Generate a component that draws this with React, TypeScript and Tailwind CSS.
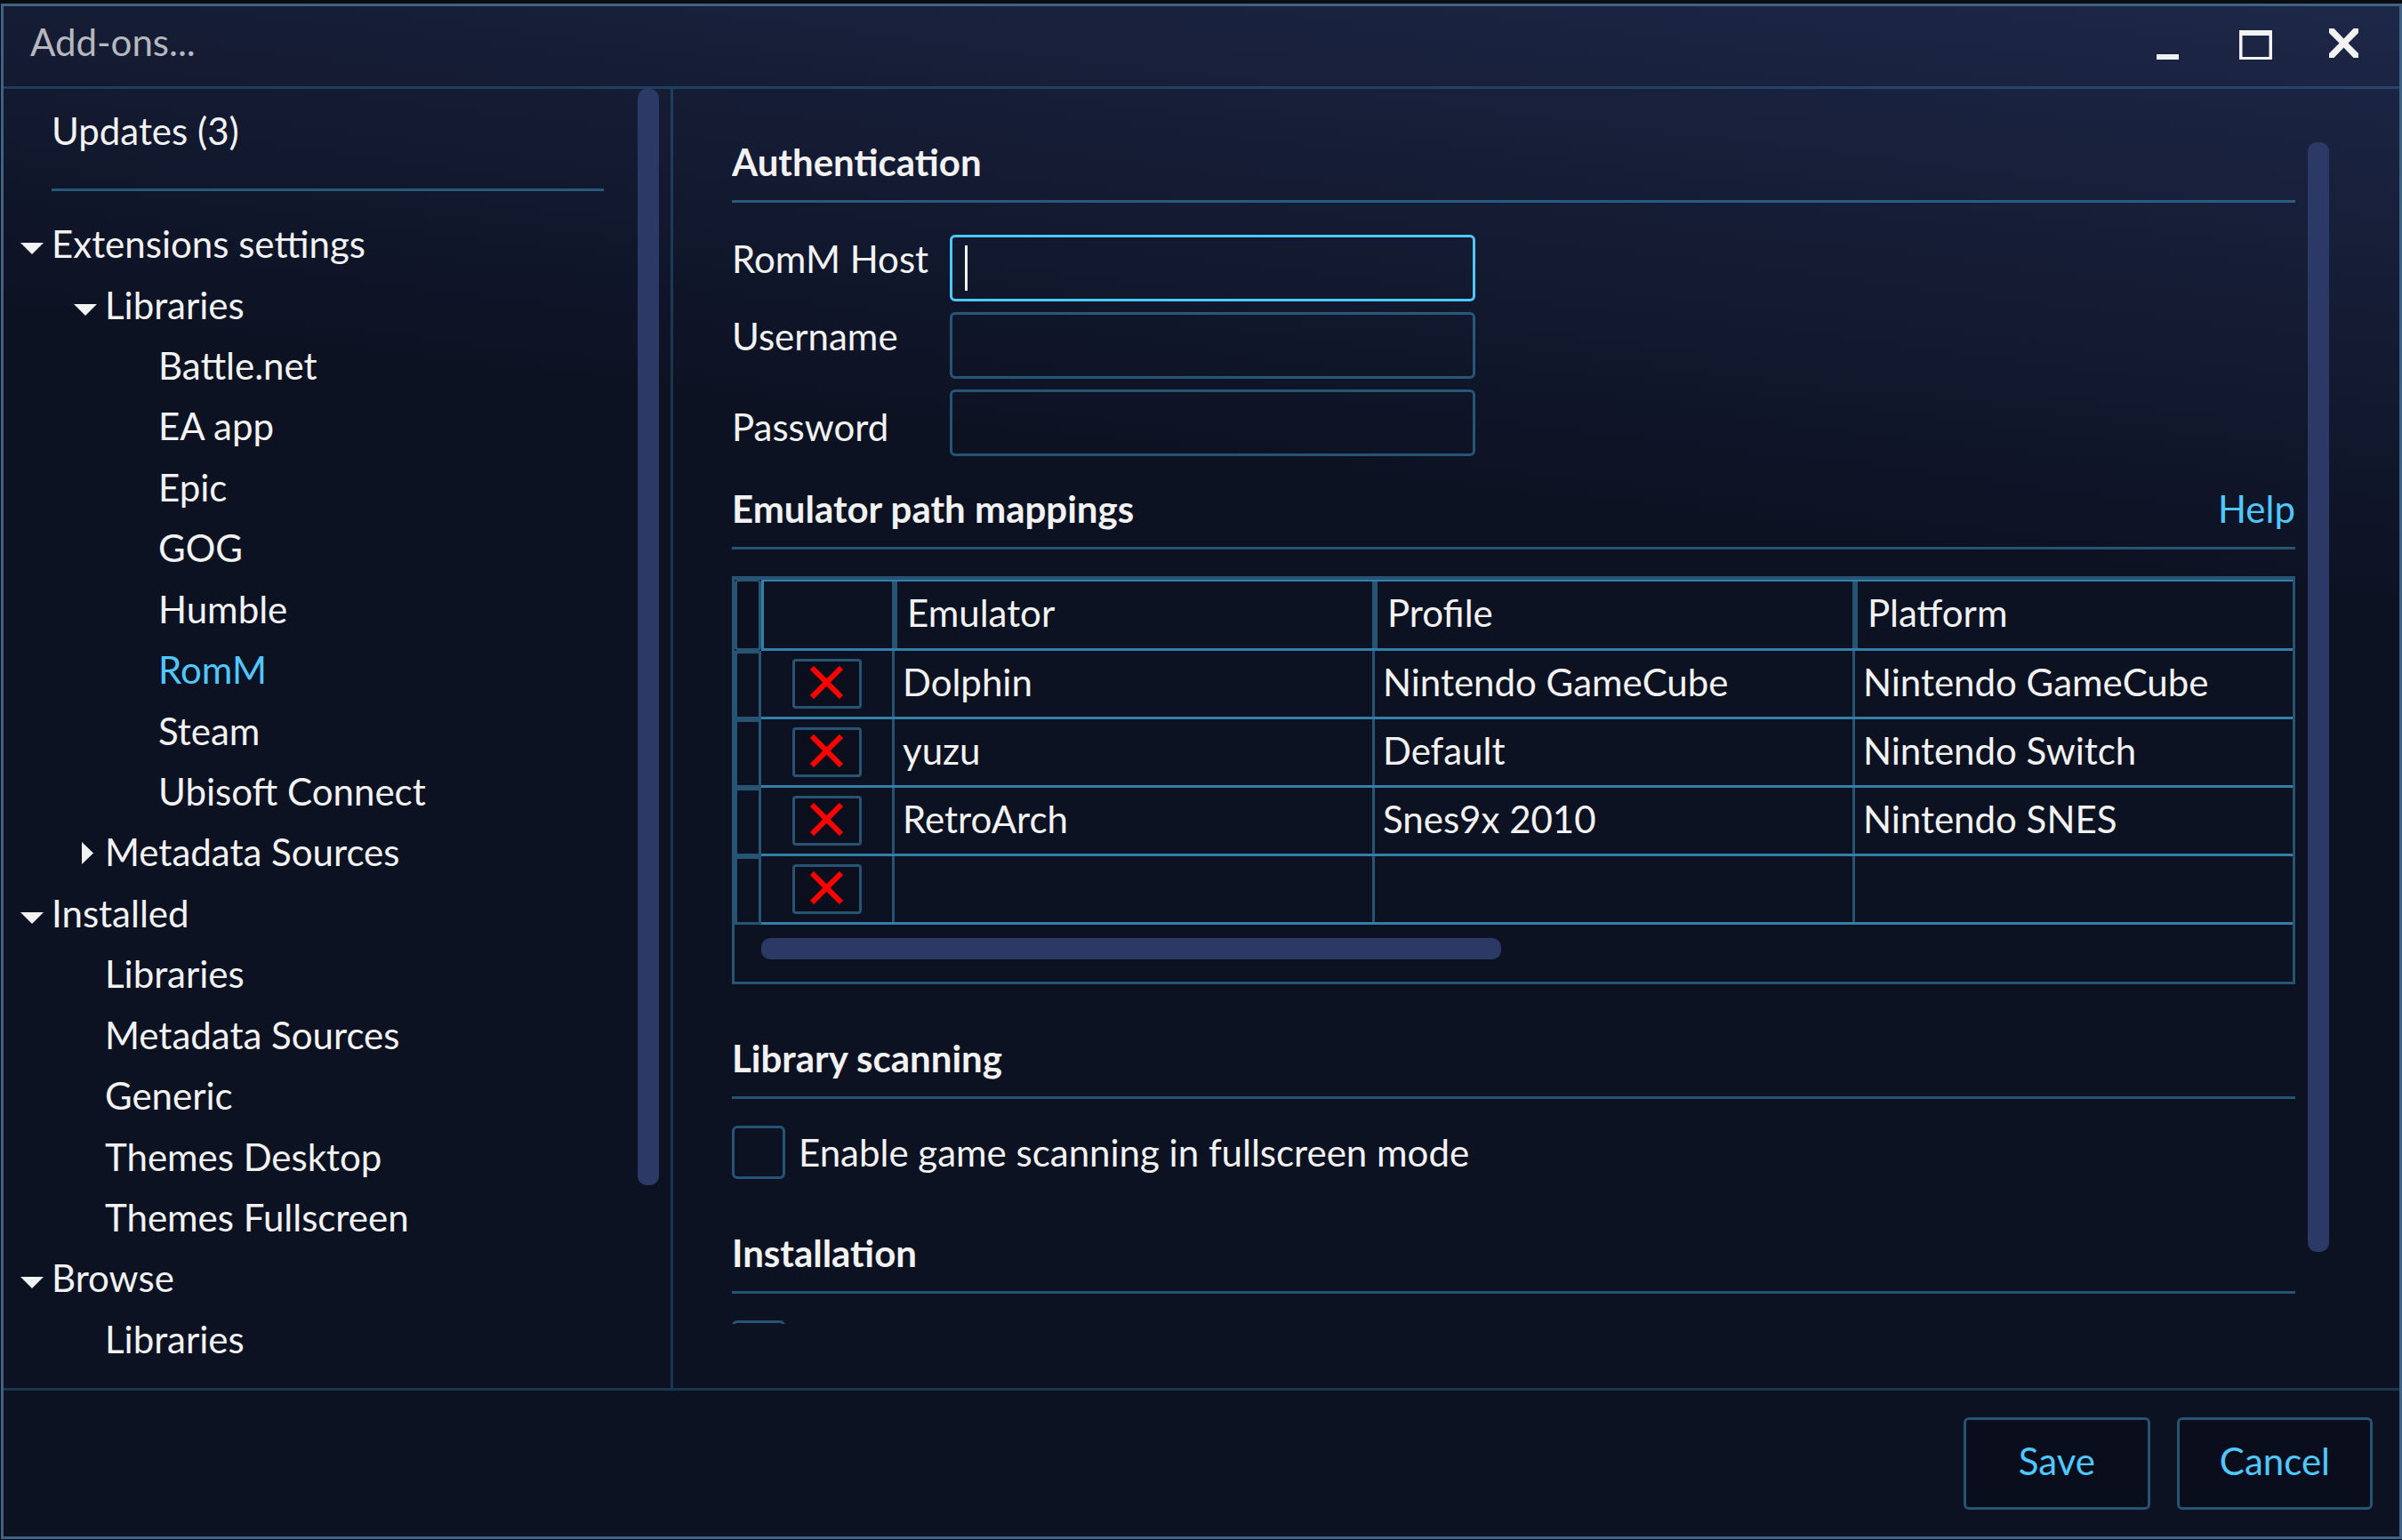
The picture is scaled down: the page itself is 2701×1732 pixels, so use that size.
import React from "react";

type TreeNode = {
  label: string;
  level: 0 | 1 | 2;
  state?: "open" | "closed";
  selected?: boolean;
};

const tree: TreeNode[] = [
  { label: "Extensions settings", level: 0, state: "open" },
  { label: "Libraries", level: 1, state: "open" },
  { label: "Battle.net", level: 2 },
  { label: "EA app", level: 2 },
  { label: "Epic", level: 2 },
  { label: "GOG", level: 2 },
  { label: "Humble", level: 2 },
  { label: "RomM", level: 2, selected: true },
  { label: "Steam", level: 2 },
  { label: "Ubisoft Connect", level: 2 },
  { label: "Metadata Sources", level: 1, state: "closed" },
  { label: "Installed", level: 0, state: "open" },
  { label: "Libraries", level: 1 },
  { label: "Metadata Sources", level: 1 },
  { label: "Generic", level: 1 },
  { label: "Themes Desktop", level: 1 },
  { label: "Themes Fullscreen", level: 1 },
  { label: "Browse", level: 0, state: "open" },
  { label: "Libraries", level: 1 },
];

const indent = { 0: "pl-[19px]", 1: "pl-[79px]", 2: "pl-[139px]" };

const mappings = [
  { emulator: "Dolphin", profile: "Nintendo GameCube", platform: "Nintendo GameCube" },
  { emulator: "yuzu", profile: "Default", platform: "Nintendo Switch" },
  { emulator: "RetroArch", profile: "Snes9x 2010", platform: "Nintendo SNES" },
  { emulator: "", profile: "", platform: "" },
];

function Expander({ state }: { state?: "open" | "closed" }) {
  return (
    <svg width="26" height="32" viewBox="0 0 26 32" className="shrink-0" fill="#f2f2f2" aria-hidden="true">
      {state === "open" && <path d="M0 16H26L13 29Z" />}
      {state === "closed" && <path d="M9 6L22 18.5L9 31Z" />}
    </svg>
  );
}

function TitleBar() {
  return (
    <header className="flex shrink-0 items-stretch justify-between border-b-3 border-[#50c8ff]/20 pr-[13px]">
      <h1 className="pt-[15px] pb-6 pl-[30px] text-[#b6b8be]">Add-ons...</h1>
      <div className="flex">
        <button type="button" aria-label="Minimize" className="flex w-[99px] justify-center pt-[25px]">
          <svg width="38" height="35" viewBox="0 0 38 35" fill="#f2f2f2">
            <path d="M6 29h25v6H6z" />
          </svg>
        </button>
        <button type="button" aria-label="Maximize" className="flex w-[99px] justify-center pt-[25px]">
          <svg width="38" height="35" viewBox="0 0 38 35" fill="#f2f2f2">
            <path fillRule="evenodd" d="M0 2h37v33H0zM3.500 8v24h30V8z" />
          </svg>
        </button>
        <button type="button" aria-label="Close" className="flex w-[99px] justify-center pt-[25px]">
          <svg width="33" height="33" viewBox="0 0 33 33" fill="#f2f2f2">
            <path d="M0 0H5.500L16.500 11.500L27.500 0H33V5L21.500 16.500L33 28V33H27.500L16.500 21.500L5.500 33H0V28L11.500 16.500L0 5Z" />
          </svg>
        </button>
      </div>
    </header>
  );
}

function Sidebar() {
  return (
    <nav className="flex w-[753px] shrink-0 border-r-3 border-[#50c8ff]/20">
      <div className="flex min-w-0 flex-1 flex-col pt-[22px] pr-[38px] pb-[22px]">
        <button type="button" className="ml-[54px] text-left">
          Updates (3)
        </button>
        <div className="mt-[39px] mb-6 ml-[54px] h-[3px] shrink-0 bg-[#50c8ff]/37" />
        <ul className="flex flex-1 flex-col">
          {tree.map((n, i) => (
            <li key={i} className="flex flex-1">
              <button
                type="button"
                className={`flex w-full items-center gap-[9px] text-left ${indent[n.level]} ${n.selected ? "text-[#50c8ff]" : ""}`}
              >
                <Expander state={n.state} />
                <span className="pt-[3px]">{n.label}</span>
              </button>
            </li>
          ))}
        </ul>
      </div>
      <div className="mr-[13px] mb-[228px] w-6 rounded-[10px] bg-[#2c3966]" />
    </nav>
  );
}

function SectionHeading({ children, aside }: { children: string; aside?: React.ReactNode }) {
  return (
    <div className="flex justify-between border-b-3 border-[#50c8ff]/37 pb-[17px]">
      <h2 className="font-bold">{children}</h2>
      {aside}
    </div>
  );
}

const fieldClass =
  "block h-[75px] w-full rounded-md border-3 px-[14px] caret-transparent outline-none bg-transparent";

function HeaderCell({ children }: { children: string }) {
  return (
    <th scope="col" className="border-t-2 border-b-3 border-[#347fa8] p-0 text-left font-normal">
      <div className="h-[75px] border-r-3 border-l-3 border-[#265472] pt-[10px] pl-[11px]">{children}</div>
    </th>
  );
}

function BodyCell({ children, last }: { children: React.ReactNode; last?: boolean }) {
  return (
    <td className="border-b-3 border-[#347fa8] p-0 align-top">
      <div className={`h-[74px] border-[#265472] pt-[10px] pl-[9px] ${last ? "" : "border-r-3"}`}>{children}</div>
    </td>
  );
}

function MappingTable() {
  return (
    <div className="mt-[30px] border-3 border-t-4 border-[#265472] pb-[25px]">
      <table className="w-full table-fixed border-separate border-spacing-0">
        <colgroup>
          <col className="w-[30px]" />
          <col className="w-[150px]" />
          <col className="w-[540px]" />
          <col className="w-[540px]" />
          <col />
        </colgroup>
        <thead>
          <tr>
            <td className="bg-[#080b16] p-0">
              <div className="h-[80px] rounded-sm border-3 border-t-2 border-[#265472] bg-[#0b0f1e]" />
            </td>
            <td className="border-t-2 border-b-3 border-[#347fa8] p-0">
              <div className="flex h-[75px]">
                <div className="w-[3px] bg-[#347fa8]" />
                <div className="flex-1 border-r-3 border-[#265472]" />
              </div>
            </td>
            <HeaderCell>Emulator</HeaderCell>
            <HeaderCell>Profile</HeaderCell>
            <th scope="col" className="border-t-2 border-b-3 border-[#347fa8] p-0 text-left font-normal">
              <div className="h-[75px] border-l-3 border-[#265472] pt-[10px] pl-[11px]">Platform</div>
            </th>
          </tr>
        </thead>
        <tbody>
          {mappings.map((m, i) => (
            <tr key={i}>
              <td className="border-3 border-[#265472] p-0" />
              <td className="border-b-3 border-[#347fa8] p-0">
                <div className="flex h-[74px] items-center justify-center border-r-3 border-[#265472]">
                  <button
                    type="button"
                    aria-label="Remove mapping"
                    className="flex h-14 w-[78px] justify-center rounded-sm border-3 border-[#265472] bg-[#0b0e1c] pt-[5px]"
                  >
                    <svg width="37" height="37" viewBox="0 0 37 37" stroke="#ff0000" strokeWidth="6">
                      <path d="M2 2L35 35M35 2L2 35" />
                    </svg>
                  </button>
                </div>
              </td>
              <BodyCell>{m.emulator}</BodyCell>
              <BodyCell>{m.profile}</BodyCell>
              <BodyCell last>{m.platform}</BodyCell>
            </tr>
          ))}
        </tbody>
      </table>
      <div className="mt-[15px] ml-[30px] h-6 w-[832px] rounded-[10px] bg-[#2c3966]" />
    </div>
  );
}

const checkClass = "size-[60px] shrink-0 appearance-none rounded-md border-3 border-[#50c8ff]/37";

function SettingsPanel() {
  return (
    <main className="flex min-h-0 min-w-0 flex-1 pt-[57px] pr-[79px] pb-[72px] pl-[66px]">
      <div className="min-w-0 flex-1 overflow-hidden">
        <section>
          <SectionHeading>Authentication</SectionHeading>
          <div className="mt-9 grid grid-cols-[233px_591px] gap-x-3 gap-y-3">
            <label htmlFor="host" className="pt-[2px]">RomM Host</label>
            <div className="relative">
              <input id="host" type="text" className={`${fieldClass} border-[#50c8ff]`} />
              <span className="absolute top-3 left-[17px] h-[51px] w-[3px] bg-[#f2f2f2]" />
            </div>
            <label htmlFor="user" className="pt-[2px]">Username</label>
            <input id="user" type="text" className={`${fieldClass} border-[#50c8ff]/37`} />
            <label htmlFor="pass" className="pt-[17px]">Password</label>
            <input id="pass" type="password" className={`${fieldClass} border-[#50c8ff]/37`} />
          </div>
        </section>

        <section className="mt-[34px]">
          <SectionHeading aside={<a href="#help" className="text-[#50c8ff]">Help</a>}>
            Emulator path mappings
          </SectionHeading>
          <MappingTable />
        </section>

        <section className="mt-[58px]">
          <SectionHeading>Library scanning</SectionHeading>
          <div className="mt-[30px] flex items-center gap-[15px]">
            <input id="scan" type="checkbox" className={checkClass} />
            <label htmlFor="scan">Enable game scanning in fullscreen mode</label>
          </div>
        </section>

        <section className="mt-[58px]">
          <SectionHeading>Installation</SectionHeading>
          <div className="mt-[30px] flex">
            <input type="checkbox" aria-label="Installation option" className={checkClass} />
          </div>
        </section>
      </div>
      <div className="mt-[3px] mb-[81px] ml-[14px] w-6 rounded-[10px] bg-[#2c3966]" />
    </main>
  );
}

const actionClass =
  "h-[104px] min-w-[210px] rounded-md border-3 border-[#265472] bg-[#0a0d1c] px-[45px] pb-[6px] text-[#50c8ff]";

export default function App() {
  return (
    <div className="h-screen bg-[#0b0c10] pt-1 pb-px pl-px font-['Lato',sans-serif] text-[42px] leading-[51px] text-[#f2f2f2]">
      <div className="flex h-full flex-col border-3 border-[#3f6285] bg-[linear-gradient(187deg,#1d2747_0px,#0d1223_660px)]">
        <TitleBar />
        <div className="flex min-h-0 flex-1">
          <Sidebar />
          <SettingsPanel />
        </div>
        <footer className="flex shrink-0 justify-end gap-[30px] border-t-3 border-[#50c8ff]/20 p-[30px]">
          <button type="button" className={actionClass}>Save</button>
          <button type="button" className={actionClass}>Cancel</button>
        </footer>
      </div>
    </div>
  );
}
